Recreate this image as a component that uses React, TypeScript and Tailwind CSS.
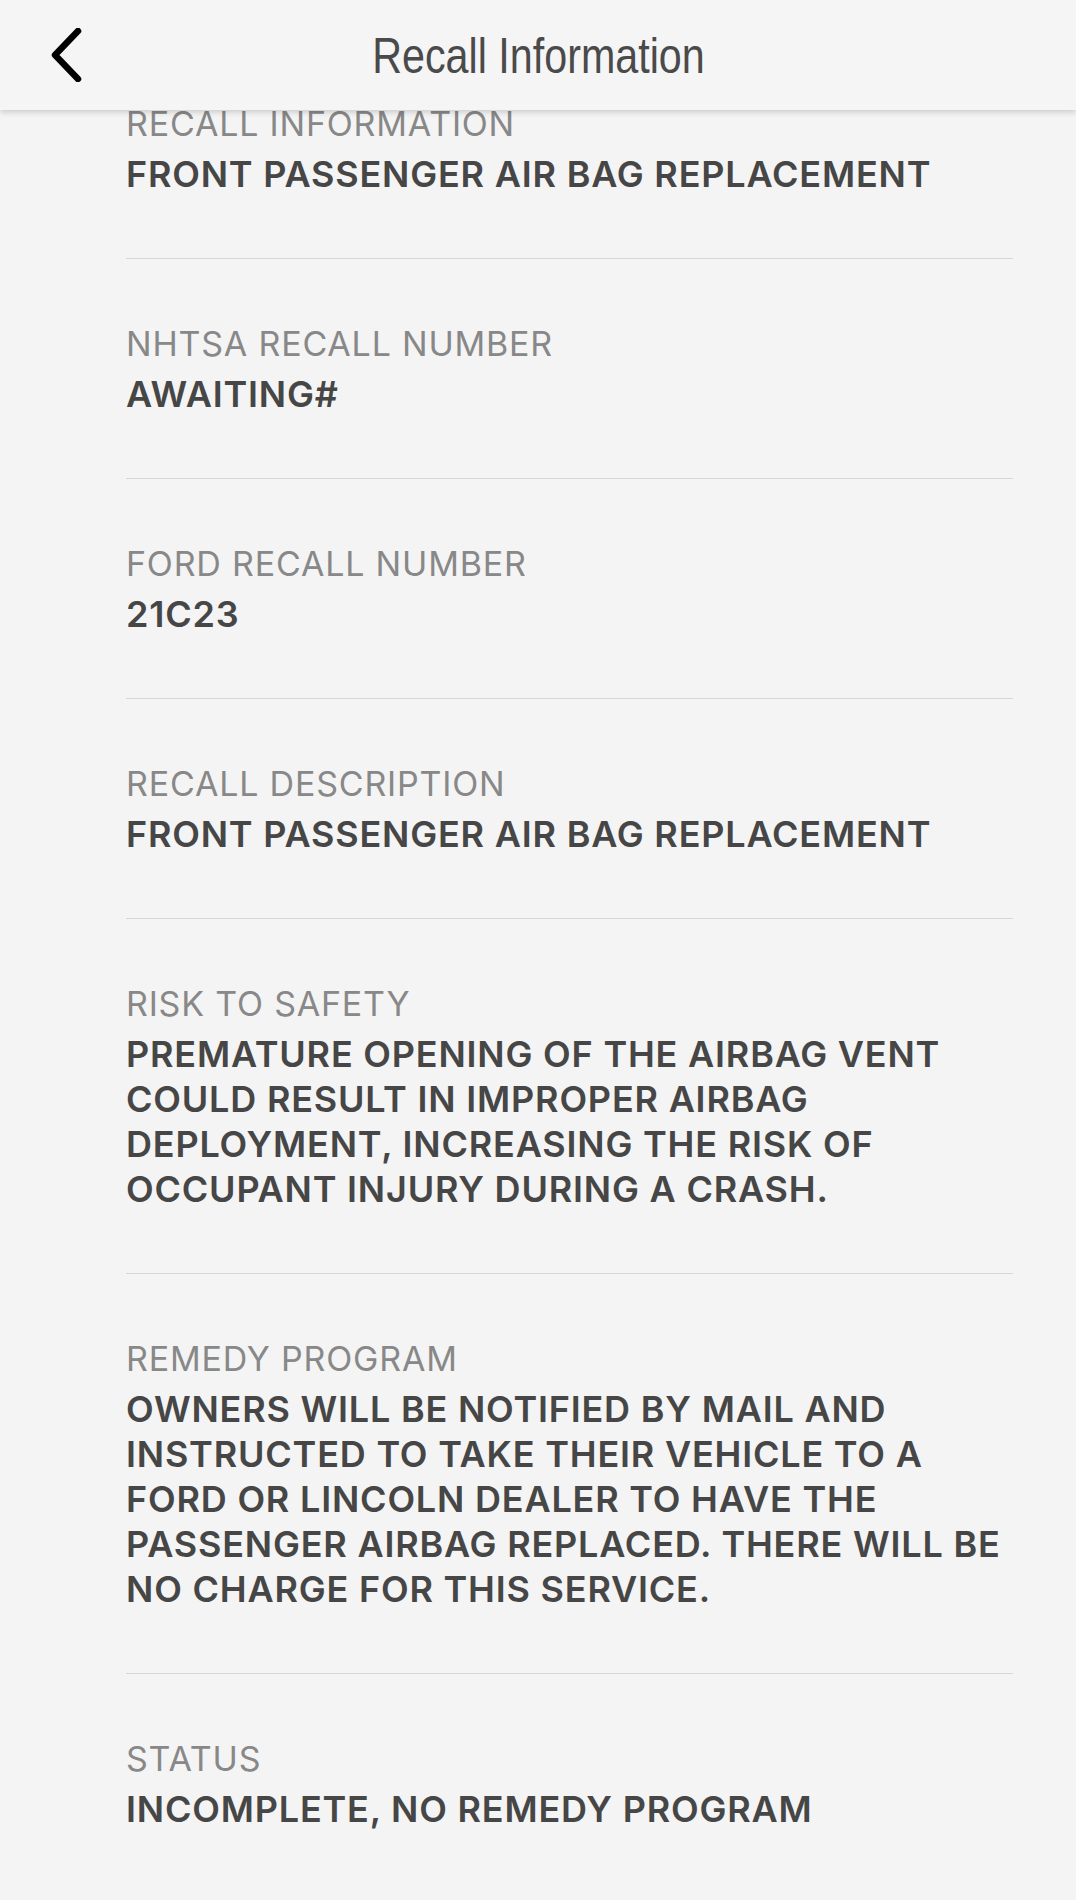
import React from "react";

type Section = { label: string; lines: string[] };

const sections: Section[] = [
  { label: "RECALL INFORMATION", lines: ["FRONT PASSENGER AIR BAG REPLACEMENT"] },
  { label: "NHTSA RECALL NUMBER", lines: ["AWAITING#"] },
  { label: "FORD RECALL NUMBER", lines: ["21C23"] },
  { label: "RECALL DESCRIPTION", lines: ["FRONT PASSENGER AIR BAG REPLACEMENT"] },
  {
    label: "RISK TO SAFETY",
    lines: [
      "PREMATURE OPENING OF THE AIRBAG VENT",
      "COULD RESULT IN IMPROPER AIRBAG",
      "DEPLOYMENT, INCREASING THE RISK OF",
      "OCCUPANT INJURY DURING A CRASH.",
    ],
  },
  {
    label: "REMEDY PROGRAM",
    lines: [
      "OWNERS WILL BE NOTIFIED BY MAIL AND",
      "INSTRUCTED TO TAKE THEIR VEHICLE TO A",
      "FORD OR LINCOLN DEALER TO HAVE THE",
      "PASSENGER AIRBAG REPLACED. THERE WILL BE",
      "NO CHARGE FOR THIS SERVICE.",
    ],
  },
  { label: "STATUS", lines: ["INCOMPLETE, NO REMEDY PROGRAM"] },
];

export default function App() {
  return (
    <div className="relative h-[1900px] w-full overflow-hidden bg-[#f4f4f4] font-['Inter',_'Liberation_Sans',_sans-serif]">
      <div className="pt-[39px] pl-[126px] pr-[63px]">
        {sections.map((s, i) => (
          <div
            key={s.label}
            className={
              i < sections.length - 1
                ? "border-b border-[#d6d6d6] pt-[65px] pb-[61px]"
                : "pt-[65px] pb-[61px]"
            }
          >
            <div className="text-[34px] leading-[40px] font-[420] text-[#888888] tracking-[0.8px] whitespace-nowrap">
              {s.label}
            </div>
            <div className="mt-2 text-[36px] leading-[45px] font-[575] text-[#464646] tracking-[0.8px] whitespace-nowrap">
              {s.lines.map((l) => (
                <div key={l}>{l}</div>
              ))}
            </div>
          </div>
        ))}
      </div>

      <div className="absolute left-0 right-0 top-0 flex h-[110px] items-center justify-center bg-[#f5f5f5] shadow-[0_2px_6px_rgba(0,0,0,0.18)]">
        <svg
          className="absolute left-[50px] top-[28px]"
          width="34"
          height="54"
          viewBox="0 0 34 54"
          fill="none"
        >
          <path
            d="M28 3 L5 27 L28 51"
            stroke="#000"
            strokeWidth="6.5"
            strokeLinecap="round"
            strokeLinejoin="round"
          />
        </svg>
        <span className="mt-[2px] inline-block scale-x-[0.825] text-[50px] leading-none text-[#4a4a4a] font-['Liberation_Sans',_sans-serif]">
          Recall Information
        </span>
      </div>
    </div>
  );
}
